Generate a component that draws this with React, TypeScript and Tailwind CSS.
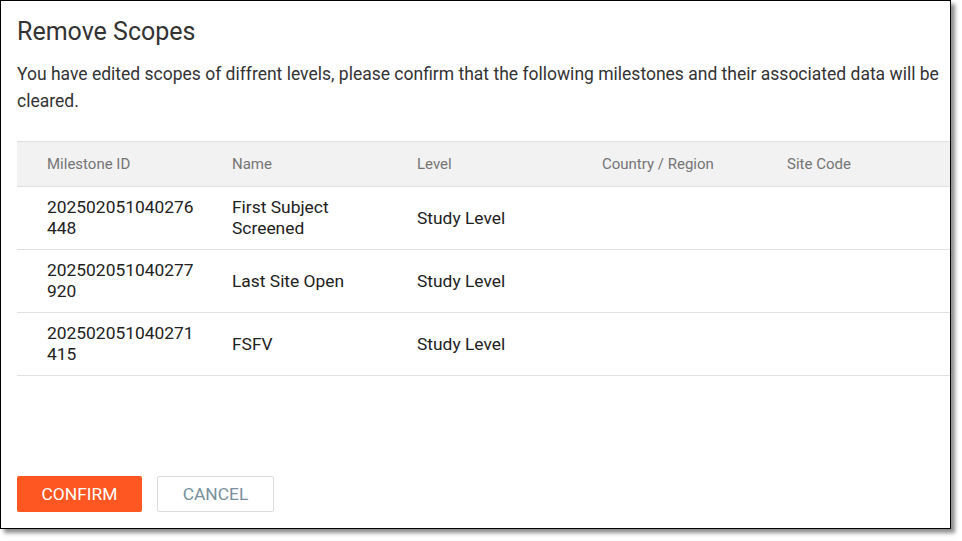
const rows = [
  { id: ['202502051040276', '448'], name: ['First Subject', 'Screened'], level: 'Study Level' },
  { id: ['202502051040277', '920'], name: ['Last Site Open'], level: 'Study Level' },
  { id: ['202502051040271', '415'], name: ['FSFV'], level: 'Study Level' },
]

const headers = ['Milestone ID', 'Name', 'Level', 'Country / Region', 'Site Code']

export default function App() {
  return (
    <div className="w-[962px] h-[541px] bg-white font-['Roboto',sans-serif]">
      <div className="w-[951px] h-[529px] border border-black bg-white shadow-[4px_4px_4px_rgba(0,0,0,0.45)] flex flex-col pl-[16px] pb-[16px]">
        <h1 className="mt-[16px] text-[25px] leading-[30px] text-[#333]">Remove Scopes</h1>
        <p className="mt-[14px] text-[17.5px] leading-[27px] text-[#333]">
          You have edited scopes of diffrent levels, please confirm that the following milestones and their associated data will be cleared.
        </p>
        <div className="mt-[26px]">
          <div className="grid grid-cols-[185px_185px_185px_185px_1fr] h-[46px] items-center bg-[#f2f2f2] border-t border-b border-[#e0e0e0] text-[15px] text-[#757575]">
            {headers.map((h) => (
              <div key={h} className="pl-[30px]">{h}</div>
            ))}
          </div>
          {rows.map((r) => (
            <div
              key={r.id[0]}
              className="grid grid-cols-[185px_185px_185px_185px_1fr] h-[63px] items-center border-b border-[#e0e0e0] text-[17.4px] leading-[21px] text-[#212121]"
            >
              <div className="pl-[30px]">
                {r.id.map((t) => (
                  <div key={t}>{t}</div>
                ))}
              </div>
              <div className="pl-[30px]">
                {r.name.map((t) => (
                  <div key={t}>{t}</div>
                ))}
              </div>
              <div className="pl-[30px]">{r.level}</div>
              <div />
              <div />
            </div>
          ))}
        </div>
        <div className="mt-auto flex gap-[15px]">
          <button className="w-[125px] h-[36px] rounded-[2px] bg-[#ff5722] text-white text-[17.4px] uppercase">Confirm</button>
          <button className="w-[117px] h-[36px] rounded-[2px] border border-[#dcdcdc] bg-white text-[#78909c] text-[17.4px] uppercase">Cancel</button>
        </div>
      </div>
    </div>
  )
}
